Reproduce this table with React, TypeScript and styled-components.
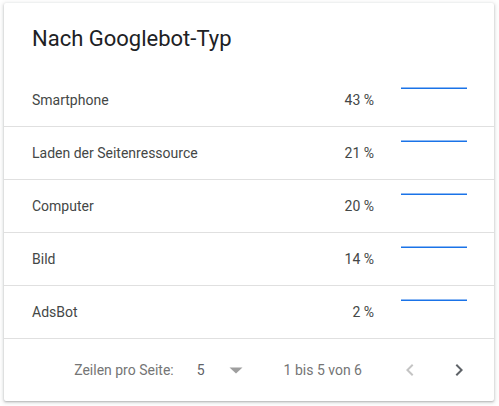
import React from "react";
import styled, { createGlobalStyle } from "styled-components";

const Global = createGlobalStyle`
  html, body { margin: 0; padding: 0; background: #ffffff; }
  body { font-family: Roboto, "Noto Sans", Arial, sans-serif; }
`;

const Page = styled.div`
  padding: 3px 5px 5px 4px;
`;

const Card = styled.section`
  width: 490px;
  height: 398px;
  box-sizing: border-box;
  background: #fff;
  border-radius: 2px;
  box-shadow: 0 1px 2px rgba(60, 64, 67, 0.3), 0 1px 4px 1px rgba(60, 64, 67, 0.15);
  display: flex;
  flex-direction: column;
`;

const Header = styled.header`
  height: 71px;
  display: flex;
  align-items: center;
  padding: 0 28px 1px;
  box-sizing: border-box;
`;

const Title = styled.h2`
  margin: 0;
  font-family: Roboto, sans-serif;
  font-weight: 400;
  font-size: 22px;
  color: #202124;
`;

const Row = styled.div`
  height: 53px;
  box-sizing: border-box;
  border-bottom: 1px solid #e0e0e0;
  display: grid;
  grid-template-columns: 1fr 80px 120px;
  align-items: center;
  padding-left: 28px;
`;

const Label = styled.span`
  font-size: 14px;
  color: #444746;
`;

const Value = styled.span`
  font-size: 14px;
  color: #444746;
  text-align: right;
`;

const SparkCell = styled.div`
  align-self: start;
  padding: 13px 0 0 27px;

  & svg { display: block; }
`;

const Footer = styled.footer`
  flex: 1;
  display: flex;
  align-items: center;
  justify-content: flex-end;
  padding: 0 23px 0 0;
  font-size: 14px;
  color: #757575;
`;

const FooterLabel = styled.span`
  margin-right: 23px;
`;

const PageSize = styled.span`
  color: #5f6368;
  margin-right: 24px;
`;

const Range = styled.span`
  margin-left: 41px;
  margin-right: 36px;
`;

const IconButton = styled.button<{ $disabled?: boolean }>`
  width: 24px;
  height: 24px;
  padding: 0;
  border: none;
  background: none;
  display: flex;
  align-items: center;
  justify-content: center;
  color: ${(p) => (p.$disabled ? "#c4c4c4" : "#5f6368")};
  & + & { margin-left: 25px; }
`;

const rows = [
  { name: "Smartphone", pct: "43 %" },
  { name: "Laden der Seitenressource", pct: "21 %" },
  { name: "Computer", pct: "20 %" },
  { name: "Bild", pct: "14 %" },
  { name: "AdsBot", pct: "2 %" },
];

const Spark = () => (
  <svg width="66" height="3" viewBox="0 0 66 3">
    <line x1="0" y1="1.2" x2="66" y2="1.2" stroke="#1a73e8" strokeWidth="1.6" />
  </svg>
);

export default function App() {
  return (
    <>
      <Global />
      <Page>
        <Card>
          <Header>
            <Title>Nach Googlebot-Typ</Title>
          </Header>
          {rows.map((r) => (
            <Row key={r.name}>
              <Label>{r.name}</Label>
              <Value>{r.pct}</Value>
              <SparkCell>
                <Spark />
              </SparkCell>
            </Row>
          ))}
          <Footer>
            <FooterLabel>Zeilen pro Seite:</FooterLabel>
            <PageSize>5</PageSize>
            <svg width="14" height="7" viewBox="0 0 14 7">
              <path d="M0.5 0.5 L13.5 0.5 L7 6.5 Z" fill="#9e9e9e" />
            </svg>
            <Range>1 bis 5 von 6</Range>
            <IconButton $disabled aria-label="Zurück">
              <svg width="24" height="24" viewBox="0 0 24 24">
                <path d="M15.41 7.41 14 6l-6 6 6 6 1.41-1.41L10.83 12z" fill="currentColor" />
              </svg>
            </IconButton>
            <IconButton aria-label="Weiter">
              <svg width="24" height="24" viewBox="0 0 24 24">
                <path d="M10 6 8.59 7.41 13.17 12l-4.58 4.59L10 18l6-6z" fill="currentColor" />
              </svg>
            </IconButton>
          </Footer>
        </Card>
      </Page>
    </>
  );
}
